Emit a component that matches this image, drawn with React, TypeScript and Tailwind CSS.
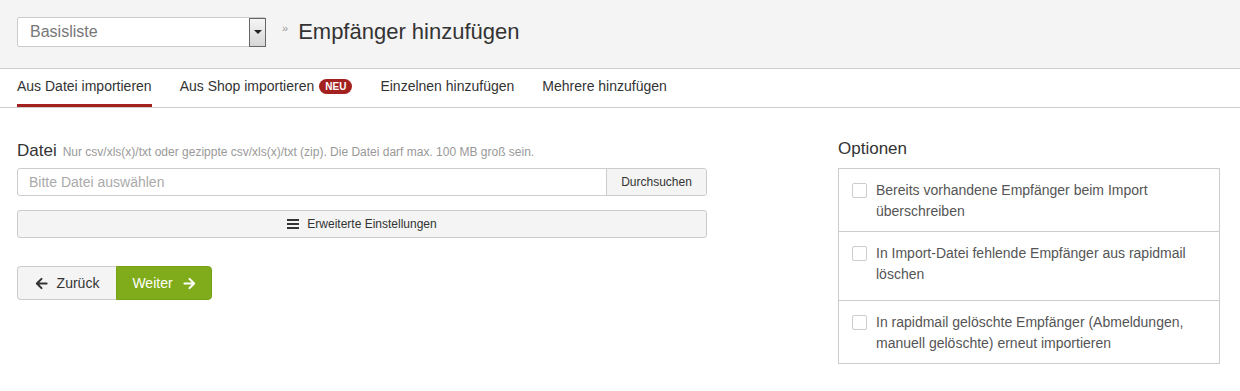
import React from "react";

const tabs = ["Aus Datei importieren", "Aus Shop importieren", "Einzelnen hinzufügen", "Mehrere hinzufügen"];

const options = [
  "Bereits vorhandene Empfänger beim Import überschreiben",
  "In Import-Datei fehlende Empfänger aus rapidmail löschen",
  "In rapidmail gelöschte Empfänger (Abmeldungen, manuell gelöschte) erneut importieren",
];

function ArrowLeft() {
  return (
    <svg width="13" height="13" viewBox="0 0 14 14" fill="none" stroke="currentColor" strokeWidth="2.2" strokeLinecap="round" strokeLinejoin="round">
      <path d="M12.5 7H2M7 2L2 7l5 5" />
    </svg>
  );
}

function ArrowRight() {
  return (
    <svg width="13" height="13" viewBox="0 0 14 14" fill="none" stroke="currentColor" strokeWidth="2.2" strokeLinecap="round" strokeLinejoin="round">
      <path d="M1.5 7H12M7 2l5 5-5 5" />
    </svg>
  );
}

export default function App() {
  return (
    <div className="min-h-[391px] bg-white text-[#333]" style={{ fontFamily: '"Liberation Sans", Arial, sans-serif' }}>
      <div className="h-[69px] bg-[#f4f4f4] border-b border-[#cccccc] flex items-center px-[17px] pb-[4px]">
        <div className="w-[249px] h-[30px] bg-white border border-[#cccccc] rounded-[2px] flex items-center">
          <span className="flex-1 pl-[12px] text-[16px] text-[#777]">Basisliste</span>
          <div className="w-[17px] h-[29px] border border-[#666] bg-gradient-to-b from-[#f5f5f5] to-[#d6d6d6] flex items-center justify-center mr-[-1px]">
            <div className="w-0 h-0 border-l-[4px] border-r-[4px] border-t-[4px] border-l-transparent border-r-transparent border-t-[#222]" />
          </div>
        </div>
        <span className="ml-[16px] text-[11px] text-[#999] self-start mt-[20px]">»</span>
        <h1 className="ml-[10px] text-[22px] text-[#333] leading-none">Empfänger hinzufügen</h1>
      </div>

      <div className="h-[39px] border-b border-[#cccccc] flex items-stretch px-[17px] gap-[28px]">
        {tabs.map((t, i) => (
          <div
            key={t}
            className={`flex items-center text-[14px] border-b-[3px] ${i === 0 ? "border-[#a3211f] text-[#333]" : "border-transparent text-[#333]"}`}
          >
            {t}
            {i === 1 && (
              <span className="ml-[5px] bg-[#a3211f] text-white text-[10px] font-bold rounded-full px-[6px] h-[15px] leading-[15px]">NEU</span>
            )}
          </div>
        ))}
      </div>

      <div className="flex px-[17px] pt-[30px] gap-[131px]">
        <div className="w-[690px]">
          <div className="flex items-baseline h-[22px]">
            <span className="text-[17px] text-[#333]">Datei</span>
            <span className="ml-[6px] text-[12px] text-[#999]">
              Nur csv/xls(x)/txt oder gezippte csv/xls(x)/txt (zip). Die Datei darf max. 100 MB groß sein.
            </span>
          </div>
          <div className="mt-[8px] flex h-[28px] border border-[#cccccc] rounded-[3px]">
            <div className="flex-1 flex items-center pl-[11px] text-[14px] text-[#aaa]">Bitte Datei auswählen</div>
            <div className="w-[100px] border-l border-[#cccccc] bg-[#f4f4f4] flex items-center justify-center text-[12px] text-[#333] rounded-r-[3px]">
              Durchsuchen
            </div>
          </div>
          <div className="mt-[14px] h-[28px] border border-[#cccccc] rounded-[3px] bg-[#f4f4f4] flex items-center justify-center text-[12px] text-[#333]">
            <svg width="12" height="10" viewBox="0 0 12 10" className="mr-[8px]">
              <rect x="0" y="0" width="12" height="2" fill="#333" />
              <rect x="0" y="4" width="12" height="2" fill="#333" />
              <rect x="0" y="8" width="12" height="2" fill="#333" />
            </svg>
            Erweiterte Einstellungen
          </div>
          <div className="mt-[28px] flex">
            <div className="h-[34px] w-[99px] border border-[#cccccc] border-r-0 rounded-l-[4px] bg-[#f4f4f4] flex items-center justify-center gap-[9px] text-[14px] text-[#333]">
              <ArrowLeft />
              Zurück
            </div>
            <div className="h-[34px] w-[96px] rounded-r-[4px] bg-[#80ac1b] border border-[#77a018] flex items-center justify-center gap-[10px] text-[14px] text-white">
              Weiter
              <ArrowRight />
            </div>
          </div>
        </div>

        <div className="w-[382px]">
          <div className="text-[17px] text-[#333] h-[22px] leading-[22px]">Optionen</div>
          <div className="mt-[8px] border border-[#cccccc]">
            {options.map((o, i) => (
              <div key={o} className={`flex pl-[13px] pr-[20px] pt-[11px] ${i > 0 ? "border-t border-[#cccccc]" : ""} ${i === 1 ? "pb-[15px]" : "pb-[9px]"}`}>
                <div className="w-[15px] h-[15px] mt-[3px] border border-[#cccccc] rounded-[2px] bg-white shrink-0" />
                <div className="ml-[9px] text-[14px] leading-[21px] text-[#555]">{o}</div>
              </div>
            ))}
          </div>
        </div>
      </div>
    </div>
  );
}
